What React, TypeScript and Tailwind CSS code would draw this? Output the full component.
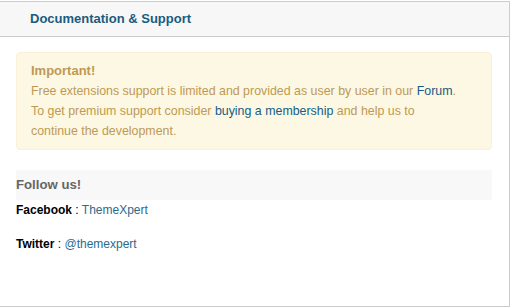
import React from "react";

export default function App() {
  return (
    <div className="w-[511px] h-[308px] bg-white pt-px" style={{ fontFamily: '"Liberation Sans", Arial, sans-serif' }}>
      <div className="w-[510px] h-[306px] border-t border-r border-b border-[#cccccc] flex flex-col">
        <div className="h-[35px] bg-[#f7f7f7] border-b border-[#cccccc] flex items-center pl-[30px]">
          <span className="text-[13px] font-bold text-[#1b5b7d]">Documentation &amp; Support</span>
        </div>
        <div className="pl-4 pr-[17px] pt-[15px]">
          <div className="bg-[#fcf8e3] border border-[#faf0d8] rounded-[4px] pt-2 pb-2 pl-[14px] text-[12.4px] leading-[20px] text-[#c09853]">
            <div className="text-[13px] font-bold">Important!</div>
            <div>
              Free extensions support is limited and provided as user by user in our{" "}
              <a className="text-[#175c85]">Forum</a>.
            </div>
            <div>
              To get premium support consider <a className="text-[#175c85]">buying a membership</a> and help us to
            </div>
            <div>continue the development.</div>
          </div>
          <div className="mt-5 h-[30px] bg-[#f8f8f8] flex items-center">
            <span className="text-[13.2px] font-bold text-[#666666]">Follow us!</span>
          </div>
          <div className="text-[12px] leading-[20px] text-black">
            <p>
              <b>Facebook</b> : <a className="text-[#2a6b8c]">ThemeXpert</a>
            </p>
            <p className="mt-[14px]">
              <b>Twitter</b> : <a className="text-[#2a6b8c]">@themexpert</a>
            </p>
          </div>
        </div>
      </div>
    </div>
  );
}
